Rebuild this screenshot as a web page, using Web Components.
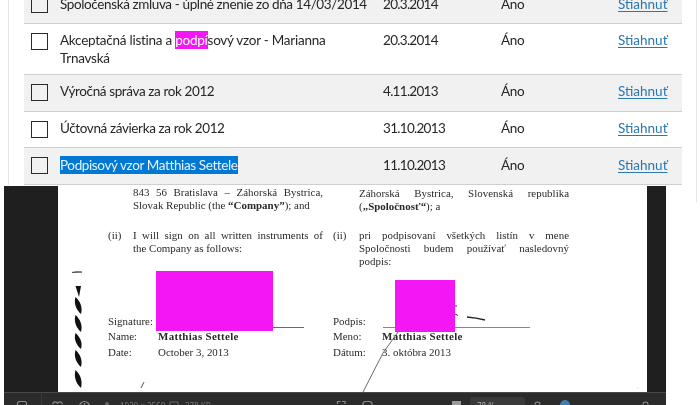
<!DOCTYPE html>
<html lang="sk"><head><meta charset="utf-8"><title>Dokumenty</title>
<style>
html,body{margin:0;padding:0;background:#fff}
body{width:700px;height:405px;overflow:hidden}
</style></head><body>
<page-shell>
  <file-table>
    <file-row alt name="Spoločenská zmluva - úplné znenie zo dňa 14/03/2014" date="20.3.2014"></file-row>
    <file-row multi date="20.3.2014">Akceptačná listina a <mark-hit>podpí</mark-hit>sový vzor - Marianna Trnavská</file-row>
    <file-row alt name="Výročná správa za rok 2012" date="4.11.2013"></file-row>
    <file-row name="Účtovná závierka za rok 2012" date="31.10.2013"></file-row>
    <file-row alt selected name="Podpisový vzor Matthias Settele" date="11.10.2013"></file-row>
  </file-table>
  <image-viewer>
    <doc-page></doc-page>
  </image-viewer>
</page-shell>
<script>
function def(name, html, init){
  customElements.define(name, class extends HTMLElement{
    constructor(){super();this.attachShadow({mode:'open'}).innerHTML=html;}
    connectedCallback(){ if(init) init(this); }
  });
}
def('page-shell',`<style>
:host{display:flex;flex-direction:column;height:405px;overflow:hidden;position:relative;font-family:Lato,"Noto Sans",sans-serif;filter:blur(.35px)}
.frame{border-left:1px solid #e6e6e6;border-right:1px solid #e6e6e6;margin:0 3px 0 8px;padding:0 14px 0 15px;height:185px;flex:none;overflow:hidden}
.view{flex:none;margin:1px 0 0 4px}
.rail{position:absolute;left:696px;top:185px;width:1px;height:17px;background:#e6e6e6}
</style><div class="frame"><slot></slot></div><div class="view"><slot name="v"></slot></div><div class="rail"></div>`,
 el=>{const v=el.querySelector('image-viewer'); if(v) v.slot='v';});
def('file-table',`<style>:host{display:block;margin-top:-13px}</style><slot></slot>`);
def('mark-hit',`<style>:host{display:inline;background:#f516f5;color:#fff;padding:1px 0}</style><slot></slot>`);
def('file-row',`<style>
:host{display:grid;grid-template-columns:36px 323px 118px 117px 64px;box-sizing:border-box;padding:8.500px 0 7.500px;border-bottom:1px solid #cfcfcf;background:#fff;color:#262626;font-size:13.5px;line-height:17.5px;letter-spacing:-.38px}
:host([alt]){background:#f1f1f1}
:host([multi]){padding-bottom:6.500px}
:host([multi]) .name{letter-spacing:-.25px}
.cb{box-sizing:border-box;width:17px;height:17px;border:1.5px solid #2a2a2a;margin:.500px 0 0 7px}
.name{min-height:19.8px;width:312px}
.d{letter-spacing:-.7px}
:host([selected]) .t{background:#0078d4;color:#e9f4fc;padding:1px 0}
a{color:#2a78b0;text-decoration:underline;text-underline-offset:2px;letter-spacing:0}
</style>
<div class="cb"></div><div class="name"><span class="t"><slot></slot></span></div><div class="d"></div><div>Áno</div><div><a href="#">Stiahnuť</a></div>`,
 el=>{const s=el.shadowRoot; s.querySelector('.d').textContent=el.getAttribute('date');
   const n=el.getAttribute('name'); if(n&&!el.firstChild) el.textContent=n;});
const ICONS=`<svg width="662" height="13" viewBox="0 0 662 13" style="display:block">
<path d="M37.500 0V13" stroke="#3a3a3a"/>
<g fill="none" stroke="#8d8d8d" stroke-width="1.2">
<rect x="13.500" y="9.500" width="9" height="9" rx="2"/>
<path d="M48.500 12c1-3 4-2.600 5-.7 1-1.900 4-2.300 5 .7"/>
<circle cx="80.500" cy="14.500" r="5"/><path d="M80.500 11v3"/>
<path d="M333.500 12V9.500h3M338 9.500h3V12"/>
<rect x="359" y="9.500" width="9" height="9" rx="2.500"/>
<path d="M531 12.500a2.500 2.500 0 0 1 5 0"/>
<path d="M639 12.500a2.500 2.500 0 0 1 5 0"/>
</g>
<circle cx="103" cy="12" r="2" fill="#666"/>
<rect x="166" y="10" width="8" height="8" fill="none" stroke="#666"/>
<rect x="448" y="9" width="9" height="8" fill="#9a9a9a"/>
<circle cx="561" cy="13" r="5" fill="#3d7fb5"/>
</svg>`;
def('image-viewer',`<style>
:host{display:block;position:relative;width:662px;height:219px;background:#1f1f1f;overflow:hidden}
.body{display:flex;height:205.500px;padding-left:54px;box-sizing:border-box}
.bar{height:13.500px;background:#2b2b2b;border-top:1px solid #4a4a4a;box-sizing:border-box;position:relative;color:#777;font:8px "Noto Sans",sans-serif}
.zoom{position:absolute;left:466px;top:4px;width:55px;height:14px;background:#3a3a3a;border-radius:3px;color:#aaa;padding:4px 0 0 7px;box-sizing:border-box;line-height:10px}
.i1,.i2{position:absolute;top:8px;white-space:nowrap;line-height:10px}
.i1{left:116px}.i2{left:181px}
svg{position:absolute;left:0;top:-1px}
</style>
<div class="body"><slot></slot></div>
<div class="bar">${ICONS}<span class="i1">1920 × 2560</span><span class="i2">278 KB</span><span class="zoom">78 %</span></div>`);
const rope=[[111,128],[129,146],[147,163],[164,181],[184,202]].map(([a,b])=>`M17.500 ${a}C22 ${a+4} 25 ${a+(b-a)*.6} 23 ${b}C18.500 ${b-4} 15.500 ${a+(b-a)*.4} 17.500 ${a}Z`).join('');
def('doc-page',`<style>
:host{display:block;position:relative;width:589px;height:205.500px;background:#fff;overflow:hidden;color:#2a2a2a;font:10.95px/12.7px "Liberation Serif",serif}
.cols{display:grid;grid-template-columns:225px 250px;margin-left:50px}
.t{text-align:left}
.j{text-align-last:justify;display:block}
.top{margin-left:25px;width:190px}
.top2{margin-left:26px;width:210px;padding-top:1px}
.li{display:grid;grid-template-columns:25px 190px;margin-top:18px}
.li2{display:grid;grid-template-columns:26px 210px;margin-top:17px}
.sig{display:grid;grid-template-columns:225px 250px;margin:47px 0 0 50px}
.s{display:grid;grid-template-columns:50px auto;row-gap:2.900px}
.s2{grid-template-columns:49px auto}
b{font-weight:700}
.s b{letter-spacing:.32px}
.mask{position:absolute;background:#f516f5}
.m1{left:98px;top:85px;width:117px;height:60px}
.m2{left:337px;top:94px;width:60px;height:52px}
svg{position:absolute;left:0;top:0}
</style>
<div class="cols">
<div><div class="top t"><span class="j">843 56 Bratislava – Záhorská Bystrica,</span>Slovak Republic (the <b>“Company”</b>); and</div>
<div class="li"><span>(ii)</span><div class="t"><span class="j">I will sign on all written instruments of</span>the Company as follows:</div></div></div>
<div><div class="top2 t"><span class="j">Záhorská Bystrica, Slovenská republika</span>(<b>„Spoločnosť“</b>); a</div>
<div class="li2"><span>(ii)</span><div class="t"><span class="j">pri podpisovaní všetkých listín v mene</span><span class="j">Spoločnosti budem používať nasledovný</span>podpis:</div></div></div>
</div>
<div class="sig">
<div class="s"><span>Signature:</span><span></span><span>Name:</span><b>Matthias Settele</b><span>Date:</span><span>October 3, 2013</span></div>
<div class="s s2"><span>Podpis:</span><span></span><span>Meno:</span><b>Matthias Settele</b><span>Dátum:</span><span>3. októbra 2013</span></div>
</div>
<svg width="589" height="206" viewBox="0 0 589 206" fill="none">
<path d="M215 141.500h31" stroke="#444" stroke-width=".8"/>
<path d="M325 141.500h147" stroke="#555" stroke-width=".7"/>
<path d="M397 120h2M397 128l3 1.500" stroke="#333" stroke-width="1"/>
<path d="M409 131c6 .5 12 1.500 18 3" stroke="#222" stroke-width="1.300"/>
<path d="M340 146l-15 21-20 39" stroke="#444" stroke-width=".8"/>
<path d="M86 196l-3 6" stroke="#555"/>
<path d="M14 86.500c3-1 7-1.200 10-.4-3 .4-7 .4-10 .4z" stroke="#444" stroke-width=".8"/>
<path d="M17.500 100h5.500l-2 11z${rope}" fill="#111"/>
<circle cx="580" cy="202" r=".6" fill="#ccc"/>
</svg>
<div class="mask m1"></div><div class="mask m2"></div>`);
</script>
</body></html>
